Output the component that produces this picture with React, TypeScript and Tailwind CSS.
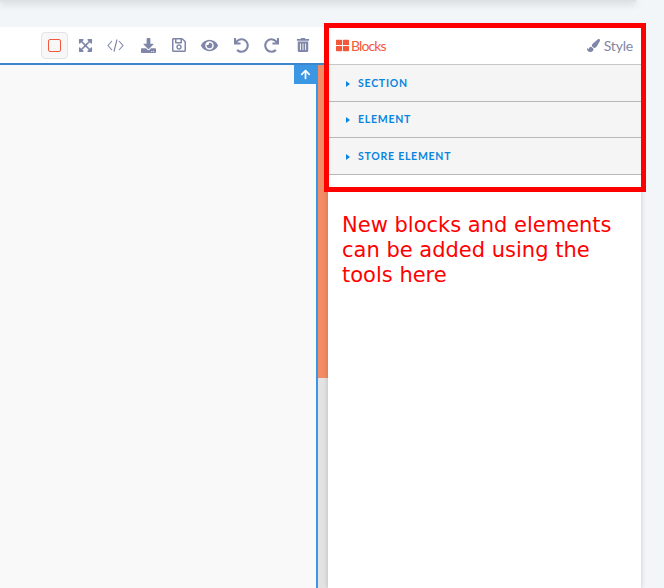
import { FaArrowUp, FaDownload, FaExpandArrowsAlt, FaEye, FaPaintBrush, FaRedo, FaRegSave, FaThLarge, FaTrashAlt, FaUndo } from "react-icons/fa";

function CodeIcon() {
  return (
    <svg width="17" height="13" viewBox="0 0 17 13" fill="none" stroke="#7f86a8" strokeWidth="1.1">
      <path d="M5 2 L1 6.5 L5 11" />
      <path d="M12 2 L16 6.5 L12 11" />
      <path d="M10 0.5 L7 12.5" />
    </svg>
  );
}

const rows = [
  { label: "SECTION", height: "h-[37px] pt-[2px]" },
  { label: "ELEMENT", height: "h-[36px]" },
  { label: "STORE ELEMENT", height: "h-[37px] pt-[2px]" },
];

export default function App() {
  return (
    <div className="relative h-[588px] w-[664px] overflow-hidden bg-[#f3f6f9] font-['Lato',sans-serif]">
      <div className="h-[2px] w-[636px] bg-[#dfe2e5] shadow-[0_1px_7px_rgba(0,0,0,0.3)]" />

      <div className="mt-[25px] flex h-[561px]">
        {/* editor */}
        <div className="flex w-[328px] flex-col">
          <div className="flex h-[38px] items-center border-b-2 border-[#3a87d0] bg-white">
            <div className="ml-[41px] flex h-[27px] w-[27px] items-center justify-center rounded-sm border border-[#e4e4e4] bg-[#f7f7f7]">
              <div className="h-[13px] w-[13px] rounded-[2px] border border-[#f4583a]" />
            </div>
            <div className="flex w-[248px] items-center text-[#7f86a8]">
              <div className="flex w-[36px] justify-center"><FaExpandArrowsAlt size={15} /></div>
              <div className="flex w-[27px] justify-center"><CodeIcon /></div>
              <div className="ml-[6px] flex w-[28px] justify-center"><FaDownload size={15} /></div>
              <div className="ml-[4px] flex w-[28px] justify-center"><FaRegSave size={16} /></div>
              <div className="ml-[4px] flex w-[28px] justify-center"><FaEye size={17} /></div>
              <div className="ml-[5px] flex w-[28px] justify-center"><FaUndo size={15} /></div>
              <div className="ml-[3px] flex w-[28px] justify-center"><FaRedo size={15} /></div>
              <div className="ml-[4px] flex w-[28px] justify-center"><FaTrashAlt size={14} /></div>
            </div>
          </div>

          <div className="flex flex-1">
            <div className="relative flex-1 border-r-2 border-[#3b97e3] bg-[#f9f9f9]">
              <div className="absolute right-0 top-0 flex h-[19px] w-[22px] items-center justify-center bg-[#3b97e3] text-white">
                <FaArrowUp size={11} />
              </div>
            </div>
            <div className="flex w-[10px] flex-col bg-[#e3e3e3]">
              <div className="h-[313px] bg-[#f28c66]" />
            </div>
          </div>
        </div>

        {/* panel */}
        <div className="w-[313px] bg-white shadow-[0_0_5px_rgba(0,0,0,0.2)]">
          <div className="flex h-[38px] items-center justify-between border-b border-[#c8c8c8] pl-[8px] pr-[8px] text-[14px]">
            <div className="flex items-center gap-[2px] text-[#f4583a]">
              <FaThLarge size={13} />
              <span className="tracking-[-0.9px]">Blocks</span>
            </div>
            <div className="flex items-center gap-[4px] text-[#7f86a8]">
              <FaPaintBrush size={13} />
              <span className="tracking-[-0.2px]">Style</span>
            </div>
          </div>
          {rows.map((row) => (
            <div key={row.label} className={`flex items-center border-b border-[#b8b8b8] bg-[#f5f5f5] pl-[18px] ${row.height}`}>
              <div className="h-0 w-0 border-y-[3.5px] border-l-[4px] border-y-transparent border-l-[#0a84e0]" />
              <span className="ml-[8px] text-[10.5px] font-bold tracking-[0.75px] text-[#0a84e0]">{row.label}</span>
            </div>
          ))}
          <p className="ml-[14px] mt-[38px] w-[295px] font-['DejaVu_Sans',sans-serif] text-[21px] leading-[25px] text-[#ff0000]">
            New blocks and elements can be added using the tools here
          </p>
        </div>
      </div>

      {/* annotation frame */}
      <div className="absolute left-[324px] top-[23px] h-[169px] w-[322px] border-[5px] border-[#ff0000]" />
    </div>
  );
}
